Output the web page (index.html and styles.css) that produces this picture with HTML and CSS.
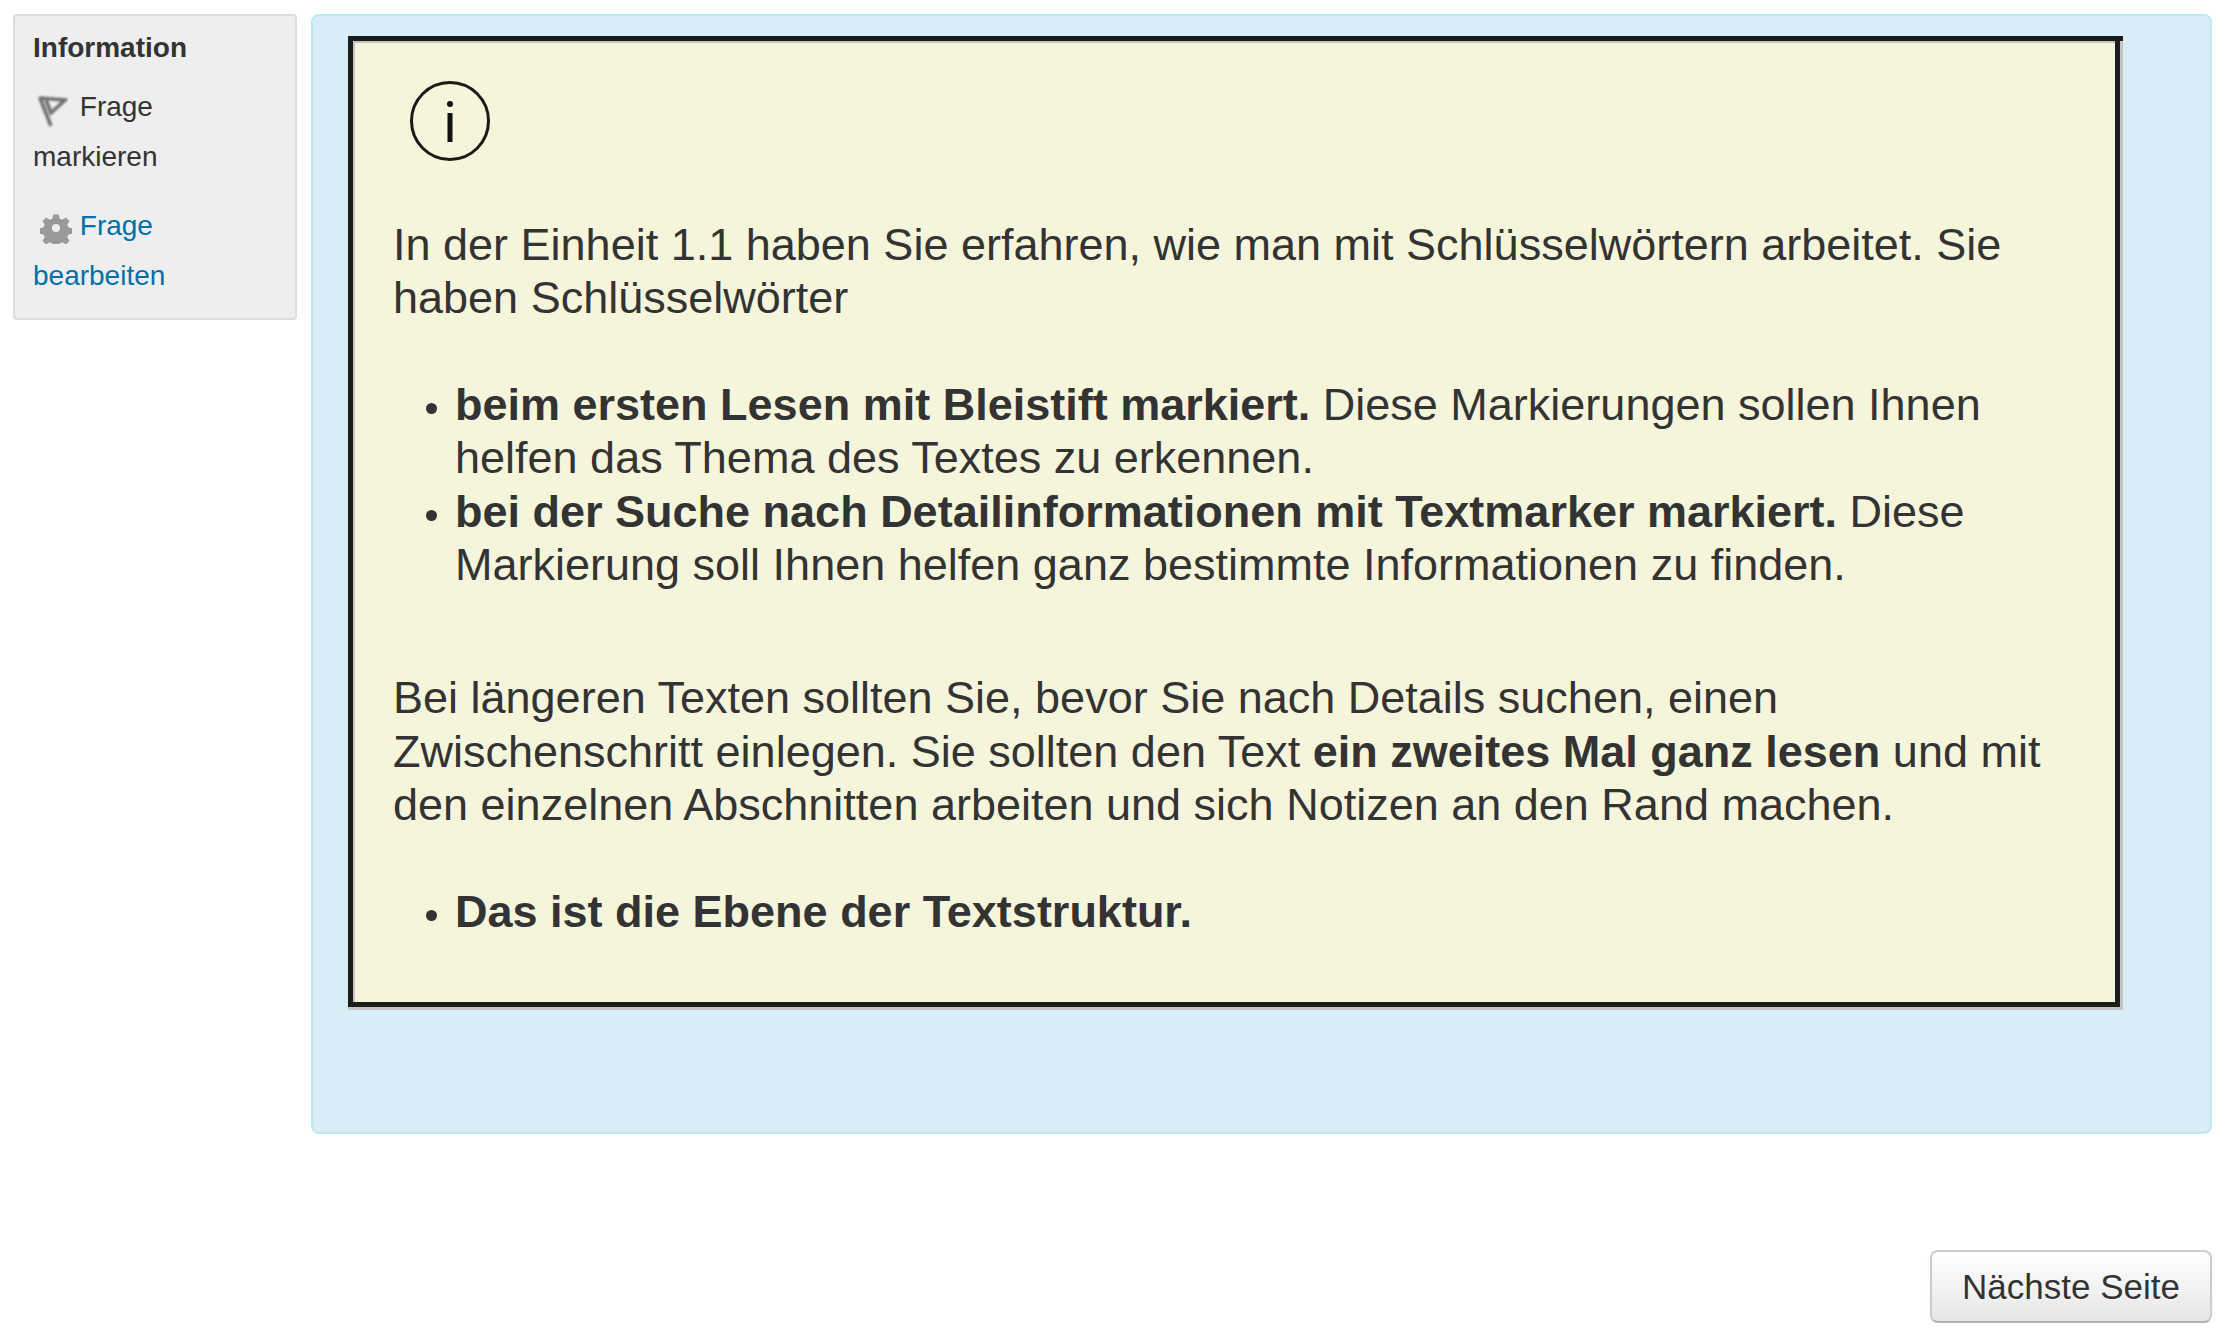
FILE: index.html
```html
<!DOCTYPE html>
<html lang="de">
	<head>
		<meta charset="utf-8">
		<title>Information</title>
		<link rel="stylesheet" href="styles.css">
	</head>
	<body>
		<div class="page">
			<div class="columns">
				<div class="info">
					<h3 class="info-title">Information</h3>
					<div class="info-item">
						<svg class="icon-flag" viewBox="0 0 32 34" width="32" height="34">
							<defs>
								<filter id="soft"><feGaussianBlur stdDeviation="0.8"></feGaussianBlur></filter>
							</defs>
							<g filter="url(#soft)" fill="none" stroke="#6e6e6e" stroke-width="3.500">
								<path d="M3 4 L29 6 L15 19 L10 6"></path>
								<path d="M4 4 L15 32"></path>
							</g>
						</svg>
						Frage markieren
					</div>
					<div class="info-item">
						<a class="info-link" href="#">
							<svg class="icon-gear" viewBox="0 0 32 32" width="32" height="32">
								<path fill="#999999" fill-rule="evenodd" d="M13 1h6l1 4.500 3 1.300 4-2.500 4 4-2.500 4 1.300 3 4.200 1v6l-4.200 1-1.300 3 2.500 4-4 4-4-2.500-3 1.300-1 4.200h-6l-1-4.200-3-1.300-4 2.500-4-4 2.500-4-1.300-3-4.200-1v-6l4.200-1 1.300-3-2.500-4 4-4 4 2.500 3-1.300zM16 11.500a4.500 4.500 0 1 0 0 9 4.500 4.500 0 0 0 0-9z" transform="translate(1.600 1.600) scale(0.9)"></path>
							</svg>
							Frage bearbeiten
						</a>
					</div>
				</div>
				<div class="content">
					<div class="notice-frame">
						<div class="notice">
							<svg class="icon-info" viewBox="0 0 80 80" width="80" height="80">
								<circle cx="40" cy="40" r="38.500" fill="none" stroke="#1a1a1a" stroke-width="3"></circle>
								<circle cx="40" cy="23" r="3" fill="#111111"></circle>
								<rect x="37.500" y="32" width="5" height="29" fill="#111111"></rect>
							</svg>
							<p class="text">In der Einheit 1.1 haben Sie erfahren, wie man mit Schlüsselwörtern arbeitet. Sie haben Schlüsselwörter</p>
							<ul class="points">
								<li><b>beim ersten Lesen mit Bleistift markiert.</b> Diese Markierungen sollen Ihnen helfen das Thema des Textes zu erkennen.</li>
								<li><b>bei der Suche nach Detailinformationen mit Textmarker markiert.</b> Diese Markierung soll Ihnen helfen ganz bestimmte Informationen zu finden.</li>
							</ul>
							<p class="text text-second">Bei längeren Texten sollten Sie, bevor Sie nach Details suchen, einen Zwischenschritt einlegen. Sie sollten den Text <b>ein zweites Mal ganz lesen</b> und mit den einzelnen Abschnitten arbeiten und sich Notizen an den Rand machen.</p>
							<ul class="points">
								<li><b>Das ist die Ebene der Textstruktur.</b></li>
							</ul>
						</div>
					</div>
				</div>
			</div>
			<div class="actions">
				<button class="next-page">Nächste Seite</button>
			</div>
		</div>
	</body>
</html>
```

FILE: styles.css
```css
* {
	box-sizing: border-box;
}

body {
	margin: 0;
	background: #ffffff;
	color: #333333;
	font-family: "Liberation Sans", Arial, sans-serif;
}

.page {
	padding: 14px 20px 0 13px;
}

.columns {
	display: grid;
	grid-template-columns: 284px 1fr;
	column-gap: 14px;
	align-items: start;
}

.info {
	height: 306px;
	padding: 15px 18px 0;
	background: #eeeeee;
	border: 2px solid #dcdcdc;
	border-radius: 4px;
	font-size: 28px;
	line-height: 50px;
}

.info-title {
	margin: 0 0 17px;
	font-size: 28px;
	line-height: 34px;
	font-weight: bold;
}

.info-item {
	margin-bottom: 19px;
}

.info-link {
	color: #0070a8;
	text-decoration: none;
}

.icon-flag {
	margin: 0 4px -12px 3px;
}

.icon-gear {
	margin: 0 0 -9px 7px;
}

.content {
	height: 1120px;
	padding: 20px 30px 0 35px;
	background: #d9edf7;
	border: 2px solid #bce8f1;
	border-radius: 8px;
}

.notice-frame {
	width: 1775px;
	padding: 0 3px 3px 0;
	background: linear-gradient(to bottom, #1c1c1c 5px, #c4c4c4 5px);
}

.notice {
	height: 971px;
	padding: 40px 60px 0 40px;
	background: #f5f5dc;
	border: 5px solid #1c1c1c;
	box-shadow: inset 2px 2px 0 #c4c4c4;
	font-size: 45px;
	line-height: 53.400px;
}

.icon-info {
	display: block;
	margin: 0 0 57px 17px;
}

.text {
	margin: 0;
}

.text-second {
	margin-top: 80px;
}

.points {
	margin: 53px 0 0;
	padding: 0 0 0 62px;
}

.points li::marker {
	font-size: 36px;
}

.actions {
	display: flex;
	justify-content: flex-end;
	margin-top: 116px;
}

.next-page {
	width: 282px;
	height: 73px;
	background: linear-gradient(to bottom, #ffffff, #e6e6e6);
	border: 2px solid #cccccc;
	border-bottom-color: #b3b3b3;
	border-radius: 8px;
	box-shadow: 0 2px 4px rgba(0, 0, 0, 0.05);
	color: #333333;
	font-family: "Liberation Sans", Arial, sans-serif;
	font-size: 35px;
	text-shadow: 0 1px 1px rgba(255, 255, 255, 0.75);
}
```
